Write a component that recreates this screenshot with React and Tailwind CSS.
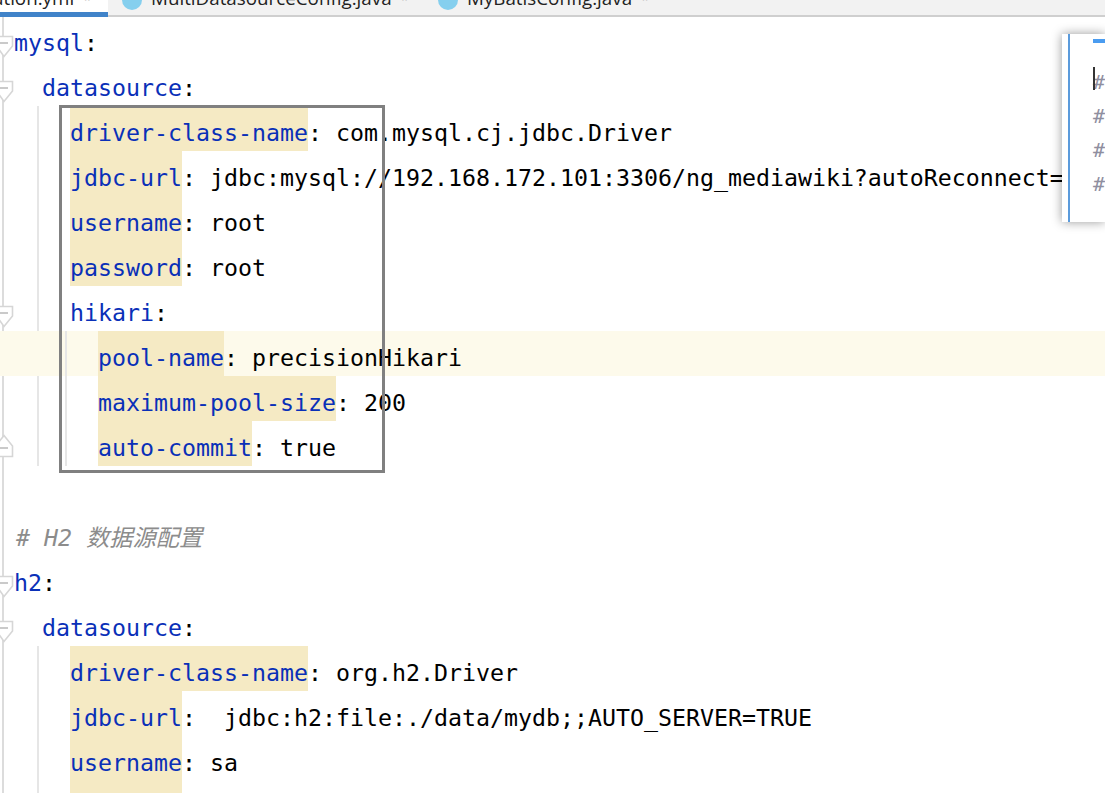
const MONO = "font-['DejaVu_Sans_Mono','Liberation_Mono',monospace]";

function Fold({ up, top }) {
  return (
    <svg width="14" height="24" viewBox="0 0 14 24" className="absolute left-0" style={{ top }}>
      {up ? (
        <path d="M-2 22.5H12.5V12L4 1.5L-2 9Z" fill="#fff" stroke="#d6d6d6" strokeWidth="1.6" />
      ) : (
        <path d="M-2 1.5H12.5V11L4 21.5L-2 13Z" fill="#fff" stroke="#d6d6d6" strokeWidth="1.6" />
      )}
      <path d={up ? "M0 14H8" : "M0 8H8"} stroke="#bdbdbd" strokeWidth="1.6" />
    </svg>
  );
}

function Row({ indent = 0, k, v, hl, active, fold, comment }) {
  const pad = ["pl-[14px]", "pl-[42px]", "pl-[70px]", "pl-[98px]"][indent];
  return (
    <div className={`relative flex h-[45px] shrink-0 whitespace-pre ${pad} ${active ? "bg-[#fdfaeb]" : ""}`}>
      {fold && <Fold up={fold === "up"} top={fold === "up" ? 13 : 19} />}
      {comment ? (
        <span className="ml-[2px] pt-[13px] italic text-[#8c8c8c] font-['DejaVu_Sans_Mono','Noto_Sans_CJK_SC',monospace]">{comment}</span>
      ) : k ? (
        <>
          <span className={`h-full pt-[13px] text-[#0a30b8] ${hl ? "bg-[#f5eac4]" : ""}`}>{k}</span>
          <span className="pt-[13px] text-black">{":" + (v || "")}</span>
        </>
      ) : null}
    </div>
  );
}

function Tab({ icon, name, w, active }) {
  return (
    <div className={`relative flex h-[17px] shrink-0 items-end overflow-hidden ${w}`}>
      {icon && <span className="ml-[14px] mb-[7px] size-[20px] shrink-0 rounded-full bg-[#85cfee]" />}
      <span className={`${icon ? "ml-[9px]" : "-ml-[7px]"} mb-[9px] whitespace-pre text-[18.8px] leading-none text-[#222] font-['Open_Sans',sans-serif]`}>{name}</span>
      <span className="ml-[10px] mb-[13px] text-[10px] leading-none tracking-[3px] text-[#c4c4c4]">× </span>
      {active && <span className="absolute inset-x-0 bottom-0 h-[5px] bg-[#4083c9]" />}
    </div>
  );
}

export default function App() {
  return (
    <div className={`relative flex h-[793px] w-[1105px] flex-col overflow-hidden bg-white ${MONO} text-[23.25px] leading-[27px]`}>
      <div className="flex h-[17px] shrink-0 border-b-2 border-[#cfcfcf] bg-[#f2f2f2]">
        <div className="flex h-[17px] w-[108px] shrink-0 bg-white">
          <Tab name="ation.yml" w="w-[108px]" active />
        </div>
        <Tab icon name="MultiDatasourceConfig.java" w="w-[316px]" />
        <Tab icon name="MyBatisConfig.java" w="w-[300px]" />
      </div>
      <div className="relative -mt-px flex flex-col">
        <div className="absolute bottom-0 left-[2px] top-px w-[2px] bg-[#dcdcdc]" />
        <div className="absolute left-[37px] top-[90px] h-[360px] w-[2px] bg-[#e6e6e6]" />
        <div className="absolute left-[65px] top-[315px] z-10 h-[135px] w-[2px] bg-[#e6e6e6]" />
        <div className="absolute left-[37px] top-[630px] h-[170px] w-[2px] bg-[#e6e6e6]" />

        <Row k="mysql" fold="down" />
        <Row indent={1} k="datasource" fold="down" />
        <Row indent={2} k="driver-class-name" hl v=" com.mysql.cj.jdbc.Driver" />
        <Row indent={2} k="jdbc-url" hl v=" jdbc:mysql://192.168.172.101:3306/ng_mediawiki?autoReconnect=true" />
        <Row indent={2} k="username" hl v=" root" />
        <Row indent={2} k="password" hl v=" root" />
        <Row indent={2} k="hikari" fold="down" />
        <Row indent={3} k="pool-name" hl active v=" precisionHikari" />
        <Row indent={3} k="maximum-pool-size" hl v=" 200" />
        <Row indent={3} k="auto-commit" hl v=" true" fold="up" />
        <Row />
        <Row comment="# H2 数据源配置" />
        <Row k="h2" fold="down" />
        <Row indent={1} k="datasource" fold="down" />
        <Row indent={2} k="driver-class-name" hl v=" org.h2.Driver" />
        <Row indent={2} k="jdbc-url" hl v="  jdbc:h2:file:./data/mydb;;AUTO_SERVER=TRUE" />
        <Row indent={2} k="username" hl v=" sa" />
        <Row indent={2} k="password" hl v=" sa" />
      </div>

      {/* annotation rectangle */}
      <div className="absolute left-[59px] top-[105px] z-20 h-[368px] w-[326px] border-[3px] border-[#808080]" />

      {/* floating preview popup */}
      <div className="absolute left-[1062px] top-[34px] z-30 flex h-[188px] w-[43px] flex-col bg-white pl-[6px] shadow-[0_0_10px_rgba(0,0,0,0.4)]">
        <div className="flex h-full flex-col border-l-2 border-[#5b9bdc] pl-[23px]">
          <div className="mt-[5px] h-[4px] w-[14px] bg-[#4a9cf0]" />
          <div className="relative mt-[27px] flex flex-col gap-[10px] text-[20px] leading-[24px] text-[#8f8f9f]">
            <span className="absolute left-0 top-[-3px] h-[23px] w-[2px] bg-[#333]" />
            <span>#</span>
            <span>#</span>
            <span>#</span>
            <span>#</span>
          </div>
        </div>
      </div>
    </div>
  );
}
